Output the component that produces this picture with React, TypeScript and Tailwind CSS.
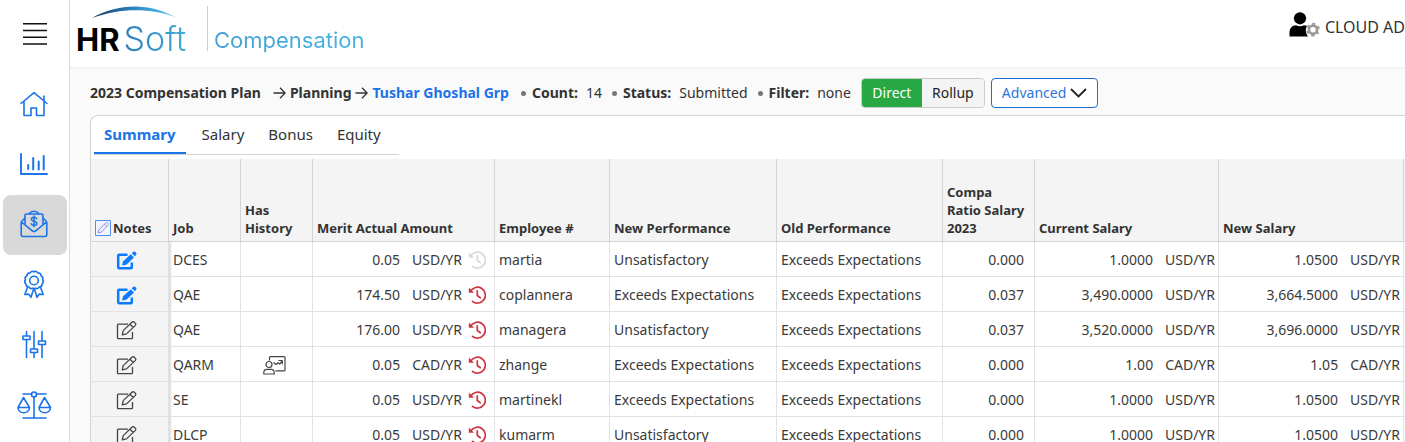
import type { ReactNode } from "react";

type Row = {
  job: string;
  noted?: boolean;
  history?: boolean;
  merit: string;
  muted?: boolean;
  unit: string;
  employee: string;
  performance: string;
  ratio: string;
  current: string;
  next: string;
};

const UNSAT = "Unsatisfactory";
const EXCEEDS = "Exceeds Expectations";

const rows: Row[] = [
  { job: "DCES", noted: true, merit: "0.05", muted: true, unit: "USD/YR", employee: "martia", performance: UNSAT, ratio: "0.000", current: "1.0000", next: "1.0500" },
  { job: "QAE", noted: true, merit: "174.50", unit: "USD/YR", employee: "coplannera", performance: EXCEEDS, ratio: "0.037", current: "3,490.0000", next: "3,664.5000" },
  { job: "QAE", merit: "176.00", unit: "USD/YR", employee: "managera", performance: UNSAT, ratio: "0.037", current: "3,520.0000", next: "3,696.0000" },
  { job: "QARM", history: true, merit: "0.05", unit: "CAD/YR", employee: "zhange", performance: EXCEEDS, ratio: "0.000", current: "1.00", next: "1.05" },
  { job: "SE", merit: "0.05", unit: "USD/YR", employee: "martinekl", performance: EXCEEDS, ratio: "0.000", current: "1.0000", next: "1.0500" },
  { job: "DLCP", merit: "0.05", unit: "USD/YR", employee: "kumarm", performance: UNSAT, ratio: "0.000", current: "1.0000", next: "1.0500" },
];

function LineIcon({ children }: { children: ReactNode }) {
  return (
    <svg width="36" height="32" viewBox="0 0 36 32" fill="none" stroke="#1b74e8" strokeWidth="1.6" strokeLinecap="round" strokeLinejoin="round" aria-hidden="true">
      {children}
    </svg>
  );
}

const HomeIcon = () => (
  <LineIcon>
    <path d="M5 14.5 18 3.7l13 10.8M8 12.5v14h7v-7.5h5.5v7.5H28v-14M28 11.5V7" />
  </LineIcon>
);

const ChartIcon = () => (
  <LineIcon>
    <path d="M5 5v20h26" strokeWidth="1.9" />
    <path d="M12.2 16v4M17.2 9v11.5M22.7 12.5v8M27.7 7v13.5" strokeWidth="2" />
  </LineIcon>
);

const MailMoneyIcon = () => (
  <LineIcon>
    <path d="M9 9 5.8 12.3a2 2 0 0 0-.6 1.4v11.8a2 2 0 0 0 2 2h21.6a2 2 0 0 0 2-2V13.700a2 2 0 0 0-.6-1.400L27 9M5.500 13l10.500 8.700a3 3 0 0 0 4 0L30.500 13" />
    <path d="M9 15.500V6.500a1.500 1.500 0 0 1 1.500-1.500h15A1.500 1.500 0 0 1 27 6.500v9M13 4.800c2.500-3.500 7.500-3.500 10 0" />
    <path d="M20.700 9.700c-.5-1-1.500-1.400-2.700-1.400-1.500 0-2.600.7-2.600 1.900 0 2.700 5.400 1.400 5.400 4.200 0 1.200-1.200 2-2.800 2-1.300 0-2.400-.5-2.800-1.600M18 7v10.800" strokeWidth="1.500" />
  </LineIcon>
);

const AwardIcon = () => (
  <LineIcon>
    <path d="M18 2.800c1.500-.9 3.200-.3 4 1.100 1.700 0 3 1.200 3.100 2.800 1.500.8 2.100 2.400 1.500 4 1 1.400.8 3.100-.5 4.200 0 1.700-1.200 2.900-2.800 3-.9 1.500-2.500 2-4 1.200-.8.500-1.800.5-2.600 0-1.500.8-3.100.3-4-1.200-1.600-.1-2.800-1.300-2.800-3-1.300-1.100-1.500-2.800-.5-4.200-.6-1.600 0-3.200 1.500-4C11 5.100 12.300 3.900 14 3.900c.8-1.400 2.500-2 4-1.100Z" />
    <circle cx="18" cy="11.500" r="4.300" />
    <path d="m11.500 18.500-2.700 7 3.900-.4 2.300 3.200 2.500-8M24.500 18.500l2.700 7-3.900-.4-2.300 3.200-2.500-8" />
  </LineIcon>
);

const SlidersIcon = () => (
  <LineIcon>
    <path d="M10.500 2.500v4M10.500 11v17.500M18 2.500v17M18 24v4.500M26 2.500v9M26 16v12.500" />
    <path d="M7 7h7v3.500H7zM14.500 20h7v3.500h-7zM22.500 12h7v3.500h-7z" />
  </LineIcon>
);

const ScalesIcon = () => (
  <LineIcon>
    <path d="M7 5h8.500M20.500 5H30M18 7.800V29M7 29h23" />
    <circle cx="18" cy="5.500" r="2.500" />
    <path d="M7.500 8.500 2 18.500h11.500zM28.500 8.500 23 18.500h11.500zM2 18.500c0 7 11.500 7 11.500 0M23 18.500c0 7 11.500 7 11.500 0" />
  </LineIcon>
);

const navItems = [
  { label: "Home", Icon: HomeIcon },
  { label: "Reports", Icon: ChartIcon },
  { label: "Compensation", Icon: MailMoneyIcon, active: true },
  { label: "Awards", Icon: AwardIcon },
  { label: "Settings", Icon: SlidersIcon },
  { label: "Equity balance", Icon: ScalesIcon },
];

const ArrowIcon = () => (
  <svg width="13" height="14" viewBox="0 0 13 14" fill="none" stroke="#333" strokeWidth="1.300" aria-hidden="true">
    <path d="M.5 7h11.500M7 1.800 12.200 7 7 12.200" />
  </svg>
);

function NoteIcon({ noted }: { noted?: boolean }) {
  return noted ? (
    <svg width="21" height="19" viewBox="0 0 21 19" aria-hidden="true">
      <path d="M11.500 3.700H3.200a1 1 0 0 0-1 1v11.600a1 1 0 0 0 1 1h11.600a1 1 0 0 0 1-1V11.500" fill="none" stroke="#0d7bff" strokeWidth="2.500" />
      <path d="M14.700 3.200 18 6.500l-7.700 7.300-4.200.7.800-4.100zM15.700 2.200 17 1c.7-.7 1.700-.7 2.400 0l.5.500c.7.700.7 1.700 0 2.400L18.800 5.200z" fill="#0d7bff" />
    </svg>
  ) : (
    <svg width="21" height="19" viewBox="0 0 21 19" fill="none" stroke="#444" strokeWidth="1.300" strokeLinejoin="round" aria-hidden="true">
      <path d="M12 3.200H2.300a.8.800 0 0 0-.8.800v12.900c0 .5.300.800.800.8h13.400c.5 0 .8-.3.800-.8v-6" />
      <path d="m6.300 13.800.9-4.200 8.700-8.300a1.800 1.800 0 0 1 2.500 0l.8.800a1.800 1.800 0 0 1 0 2.500l-8.700 8.300zM14 3.200l3.300 3.300" />
    </svg>
  );
}

const HistoryIcon = ({ muted }: { muted?: boolean }) => (
  <svg width="18" height="18" viewBox="0 0 18 18" fill="none" stroke={muted ? "#d9d9d9" : "#d0323f"} strokeWidth="1.700" strokeLinecap="round" aria-hidden="true">
    <path d="M2.600 5.200A7.900 7.900 0 1 1 4.500 15.300" />
    <path d="M9.300 4.800v4.700l3 2.200" />
    <path d="M.8 1.500v5.200H6z" fill={muted ? "#d9d9d9" : "#d0323f"} stroke="none" />
  </svg>
);

const PresenterIcon = () => (
  <svg width="23" height="19" viewBox="0 0 23 19" fill="none" stroke="#444" strokeWidth="1.200" strokeLinejoin="round" aria-hidden="true">
    <path d="M6.500 4.500v-3a.9.900 0 0 1 .9-.9h13.700a.9.900 0 0 1 .9.900v12.400a.9.900 0 0 1-.9.900H12.500" />
    <circle cx="6" cy="8.500" r="3" />
    <path d="M.8 18v-1.500c0-2 1.400-3.200 3.200-3.200h4c1.800 0 3.200 1.200 3.200 3.200V18zM10.500 6.500 13 8.500l2-1.800 1.700 1.300 2.600-3.200M15.500 4.500h3.800v3.800" />
  </svg>
);

const HeaderNoteIcon = () => (
  <svg width="16" height="16" viewBox="0 0 16 16" fill="none" aria-hidden="true">
    <path d="M.5.500h15v15H.5z" stroke="#4d8fef" fill="#f1f3ff" />
    <path d="m3 13 .8-3L10.700 3a1.300 1.300 0 0 1 1.900 0l.4.400c.5.500.5 1.300 0 1.900L6 12.200zM9.500 4.300l2.200 2.200" stroke="#8f8fe0" />
  </svg>
);

const UserGearIcon = () => (
  <svg width="32" height="26" viewBox="0 0 32 26" aria-hidden="true">
    <circle cx="11" cy="6.300" r="6.100" fill="#000" />
    <path d="M.5 24.500v-4c0-4.500 3-7.300 6.500-7.300 2.500 1.500 5.500 1.500 8 0 1 0 2 .3 3 .8-2 3.500-1.300 8 1.300 10.500z" fill="#000" />
    <circle cx="24" cy="17.700" r="4.100" fill="none" stroke="#999" strokeWidth="2.700" />
    <circle cx="24" cy="17.700" r="5.800" fill="none" stroke="#999" strokeWidth="2.200" strokeDasharray="2.800 3.274" strokeDashoffset="1.400" transform="rotate(30 24 17.700)" />
  </svg>
);

const head = "border-r border-b border-[#d4d4d4] bg-[#f4f4f4] px-1 pb-1 text-left align-bottom text-[13px] leading-[18px] font-bold text-[#333]";
const cellBase = "h-[35px] border-r border-b border-[#e2e2e2] pt-0.5 whitespace-nowrap";
const cell = cellBase + " px-1";

function Money({ amount, unit, children }: { amount: string; unit: string; children?: ReactNode }) {
  return (
    <div className="flex items-center justify-end">
      <span className="mr-3">{amount}</span>
      <span>{unit}</span>
      {children}
    </div>
  );
}

function Dot() {
  return <span className="h-[5px] w-[5px] rounded-full bg-[#777]" />;
}

function Sidebar() {
  return (
    <aside className="flex w-[70px] shrink-0 flex-col border-r border-[#ddd] bg-white">
      <button type="button" aria-label="Menu" className="flex h-[75px] items-start justify-center pt-[22px]">
        <svg width="24" height="24" viewBox="0 0 24 24" stroke="#111" strokeWidth="1.600" aria-hidden="true">
          <path d="M0 1.700h24M0 8.500h24M0 15.300h24M0 22h24" />
        </svg>
      </button>
      <nav className="flex flex-col pr-0.5 pl-[3px]">
        {navItems.map(({ label, Icon, active }) => (
          <a
            key={label}
            href="#"
            aria-label={label}
            className={active ? "flex h-[60px] items-center justify-center rounded-lg bg-[#d9d9d9] pr-[3px]" : "flex h-[60px] items-center justify-center pr-[3px]"}
          >
            <Icon />
          </a>
        ))}
      </nav>
    </aside>
  );
}

function Header() {
  return (
    <header className="flex h-[69px] shrink-0 items-start justify-between border-b-2 border-[#f1f1f1] bg-white">
      <div className="flex items-start pl-1.5">
        <div className="flex w-[117px] flex-col items-start pt-1.5">
          <svg width="100" height="13" viewBox="0 0 100 13" className="ml-2.5" aria-hidden="true">
            <defs>
              <linearGradient id="arc">
                <stop offset="0" stopColor="#17365f" />
                <stop offset=".5" stopColor="#2b85c2" />
                <stop offset="1" stopColor="#62d0f0" />
              </linearGradient>
            </defs>
            <path d="M6 12C32-3 64-3.500 90 11.500 64 1.500 34 2 6 12Z" fill="url(#arc)" />
          </svg>
          <div className="flex items-baseline gap-1 font-['Inter'] leading-[40px]">
            <span className="text-[31px] font-bold text-black">HR</span>
            <span className="bg-linear-to-r from-[#2c7dbd] to-[#45a9d6] bg-clip-text text-[34px] font-light text-transparent">Soft</span>
          </div>
        </div>
        <div className="mt-1.5 ml-3.5 h-[45px] w-px bg-[#ccc]" />
        <span className="mt-[26px] ml-1.5 bg-linear-to-r from-[#45a0d6] to-[#45b4e0] bg-clip-text font-['Inter'] text-[22px] leading-7 text-transparent">Compensation</span>
      </div>
      <button type="button" className="mt-2.5 flex items-center gap-1 text-base leading-[26px] whitespace-nowrap text-[#333]">
        <UserGearIcon />
        <span className="mt-1">CLOUD AD</span>
      </button>
    </header>
  );
}

function Toolbar() {
  return (
    <div className="flex h-[46px] shrink-0 items-center pt-0.5 pl-5 text-sm whitespace-nowrap text-[#333]">
      <div className="flex items-center font-bold">
        <span>2023 Compensation Plan</span>
        <span className="mr-1 ml-3"><ArrowIcon /></span>
        <span>Planning</span>
        <span className="mx-1"><ArrowIcon /></span>
        <a href="#" className="text-[#1a73e8]">Tushar Ghoshal Grp</a>
      </div>
      <div className="ml-3 flex items-center gap-1.5">
        <Dot />
        <b className="mr-0.5">Count:</b>
        <span className="mr-1">14</span>
        <Dot />
        <b className="mr-0.5">Status:</b>
        <span className="mr-1">Submitted</span>
        <Dot />
        <b className="mr-0.5">Filter:</b>
        <span>none</span>
      </div>
      <div className="ml-2.5 flex h-[30px] overflow-hidden rounded border border-[#ccc] text-sm text-[#222]">
        <button type="button" className="w-[60px] bg-[#28a745] text-white">Direct</button>
        <button type="button" className="w-[62px] bg-[#f4f4f4]">Rollup</button>
      </div>
      <button type="button" className="ml-1.5 flex h-[30px] items-center gap-1 rounded border border-[#1b6fd0] bg-white px-2.5 text-sm text-[#2f74dc]">
        Advanced
        <svg width="17" height="10" viewBox="0 0 17 10" fill="none" stroke="#222" strokeWidth="1.800" aria-hidden="true">
          <path d="m1 1 7.500 7.500L16 1" />
        </svg>
      </button>
    </div>
  );
}

function CompensationTable() {
  return (
    <table className="w-full table-fixed border-separate border-spacing-0 text-sm text-[#3a3a3a]">
      <colgroup>
        <col className="w-[78px]" />
        <col className="w-[72px]" />
        <col className="w-[72px]" />
        <col className="w-[182px]" />
        <col className="w-[115px]" />
        <col className="w-[167px]" />
        <col className="w-[166px]" />
        <col className="w-[92px]" />
        <col className="w-[184px]" />
        <col className="w-[185px]" />
        <col />
      </colgroup>
      <thead>
        <tr className="h-[83px]">
          <th scope="col" className={head}>
            <span className="flex items-center gap-0.5"><HeaderNoteIcon />Notes</span>
          </th>
          <th scope="col" className={head}>Job</th>
          <th scope="col" className={head}>Has History</th>
          <th scope="col" className={head}>Merit Actual Amount</th>
          <th scope="col" className={head}>Employee #</th>
          <th scope="col" className={head}>New Performance</th>
          <th scope="col" className={head}>Old Performance</th>
          <th scope="col" className={head}>Compa<br />Ratio Salary 2023</th>
          <th scope="col" className={head}>Current Salary</th>
          <th scope="col" className={head}>New Salary</th>
          <td className="border-b border-[#d4d4d4] bg-[#f4f4f4]" />
        </tr>
      </thead>
      <tbody>
        {rows.map((row) => (
          <tr key={row.employee}>
            <td className="h-[35px] border-r border-b border-[#e2e2e2] bg-[#f4f4f4] pt-0.5">
              <button type="button" aria-label={"Notes for " + row.employee} className="ml-[25px] flex">
                <NoteIcon noted={row.noted} />
              </button>
            </td>
            <td className={cell + " shadow-[inset_3px_0_2px_-1px_#ddd]"}>{row.job}</td>
            <td className={cell}>
              {row.history && <span className="flex justify-center pr-1"><PresenterIcon /></span>}
            </td>
            <td className={cell}>
              <Money amount={row.merit} unit={row.unit}>
                <button type="button" aria-label={"Merit history for " + row.employee} className="mr-1 ml-1.5">
                  <HistoryIcon muted={row.muted} />
                </button>
              </Money>
            </td>
            <td className={cell}>{row.employee}</td>
            <td className={cell}>{row.performance}</td>
            <td className={cell}>{EXCEEDS}</td>
            <td className={cellBase + " pr-2.5 text-right"}>{row.ratio}</td>
            <td className={cellBase + " pr-[3px]"}><Money amount={row.current} unit={row.unit} /></td>
            <td className={cellBase + " pr-[3px]"}><Money amount={row.next} unit={row.unit} /></td>
            <td className="border-b border-[#e2e2e2]" />
          </tr>
        ))}
      </tbody>
    </table>
  );
}

export default function App() {
  return (
    <div className="flex h-screen overflow-hidden bg-[#fafafa] font-['Noto_Sans','Open_Sans',sans-serif]">
      <Sidebar />
      <main className="flex min-w-0 grow flex-col">
        <Header />
        <Toolbar />
        <section className="ml-5 flex grow flex-col overflow-hidden rounded-tl-lg border-t border-l border-[#d4d4d4] bg-white">
          <div role="tablist" className="mb-1 ml-[3px] flex h-[39px] shrink-0 self-start border-b border-[#d4d4d4] pr-2.5 text-[15px] text-[#333]">
            <button type="button" role="tab" aria-selected="true" className="border-b-2 border-[#1a73e8] px-2.5 font-bold text-[#1a73e8]">Summary</button>
            <button type="button" role="tab" aria-selected="false" className="pr-2 pb-0.5 pl-4">Salary</button>
            <button type="button" role="tab" aria-selected="false" className="pr-2 pb-0.5 pl-4">Bonus</button>
            <button type="button" role="tab" aria-selected="false" className="pr-2 pb-0.5 pl-4">Equity</button>
          </div>
          <CompensationTable />
        </section>
      </main>
    </div>
  );
}
